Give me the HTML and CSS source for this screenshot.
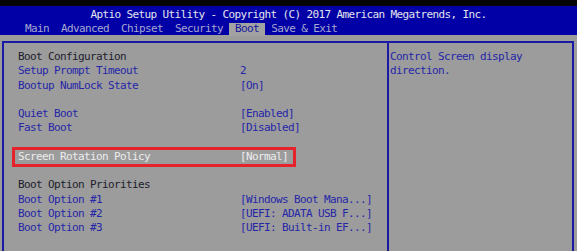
FILE: index.html
```html
<!DOCTYPE html>
<html lang="en">
<head>
  <meta charset="UTF-8">
  <meta name="viewport" content="width=device-width, initial-scale=1.0">
  <title>Aptio Setup Utility</title>
  <link rel="stylesheet" href="styles.css">
</head>
<body>
  <div class="topbar"></div>

  <div class="header">
    <div class="title">Aptio Setup Utility - Copyright (C) 2017 American Megatrends, Inc.</div>
    <div class="tabs">
      <span class="tab">Main</span>
      <span class="tab">Advanced</span>
      <span class="tab">Chipset</span>
      <span class="tab">Security</span>
      <span class="tab active">Boot</span>
      <span class="tab">Save &amp; Exit</span>
    </div>
  </div>

  <div class="screen">
    <div class="frame">
      <div class="settings">
        <div class="row heading">Boot Configuration</div>
        <div class="row"><span>Setup Prompt Timeout</span><span>2</span></div>
        <div class="row"><span>Bootup NumLock State</span><span>[On]</span></div>
        <div class="row empty"></div>
        <div class="row"><span>Quiet Boot</span><span>[Enabled]</span></div>
        <div class="row"><span>Fast Boot</span><span>[Disabled]</span></div>
        <div class="row empty"></div>
        <div class="row selected"><span>Screen Rotation Policy</span><span>[Normal]</span></div>
        <div class="row empty"></div>
        <div class="row heading">Boot Option Priorities</div>
        <div class="row"><span>Boot Option #1</span><span>[Windows Boot Mana...]</span></div>
        <div class="row"><span>Boot Option #2</span><span>[UEFI: ADATA USB F...]</span></div>
        <div class="row"><span>Boot Option #3</span><span>[UEFI: Built-in EF...]</span></div>
      </div>
      <div class="help">
        <div>Control Screen display</div>
        <div>direction.</div>
      </div>
    </div>
  </div>
</body>
</html>
```

FILE: styles.css
```css
body {
  margin: 0;
  padding: 0;
  width: 577px;
  height: 251px;
  overflow: hidden;
  background-color: #9c9c9c;
  font-family: "DejaVu Sans Mono", "Liberation Mono", monospace;
  font-size: 11px;
  letter-spacing: -0.62px;
  white-space: nowrap;
}

.topbar {
  height: 6px;
  background-color: #050505;
}

.header {
  height: 29px;
  background-color: #0000a6;
}

.title {
  height: 17px;
  line-height: 18px;
  text-align: center;
  color: #e4e4ec;
}

.tabs {
  display: flex;
  padding-left: 19px;
  height: 12px;
}

.tab {
  padding: 0 6px;
  height: 13px;
  line-height: 11px;
  color: #a6a8d0;
}

.tab.active {
  background-color: #a2a2a2;
  color: #1414a0;
}

.screen {
  padding: 6px 3px 0 2px;
}

.frame {
  display: flex;
  height: 220px;
  border-top: 2px solid #1a1aa4;
  border-left: 2px solid #1a1aa4;
  border-right: 2px solid #1a1aa4;
}

.settings {
  width: 369px;
  padding: 7px 0 0 14px;
}

.row {
  display: grid;
  grid-template-columns: 222px auto;
  height: 14.25px;
  line-height: 14.25px;
  color: #2626a8;
}

.row.heading {
  color: #1c1c2c;
}

.row.selected {
  margin-left: -3px;
  padding-left: 3px;
  width: 275px;
  color: #ececec;
  outline: 3px solid #e6232b;
}

.help {
  flex: 1;
  border-left: 2px solid #1a1aa4;
  padding: 7px 0 0 1px;
  line-height: 14.25px;
  color: #2626a8;
}
```
